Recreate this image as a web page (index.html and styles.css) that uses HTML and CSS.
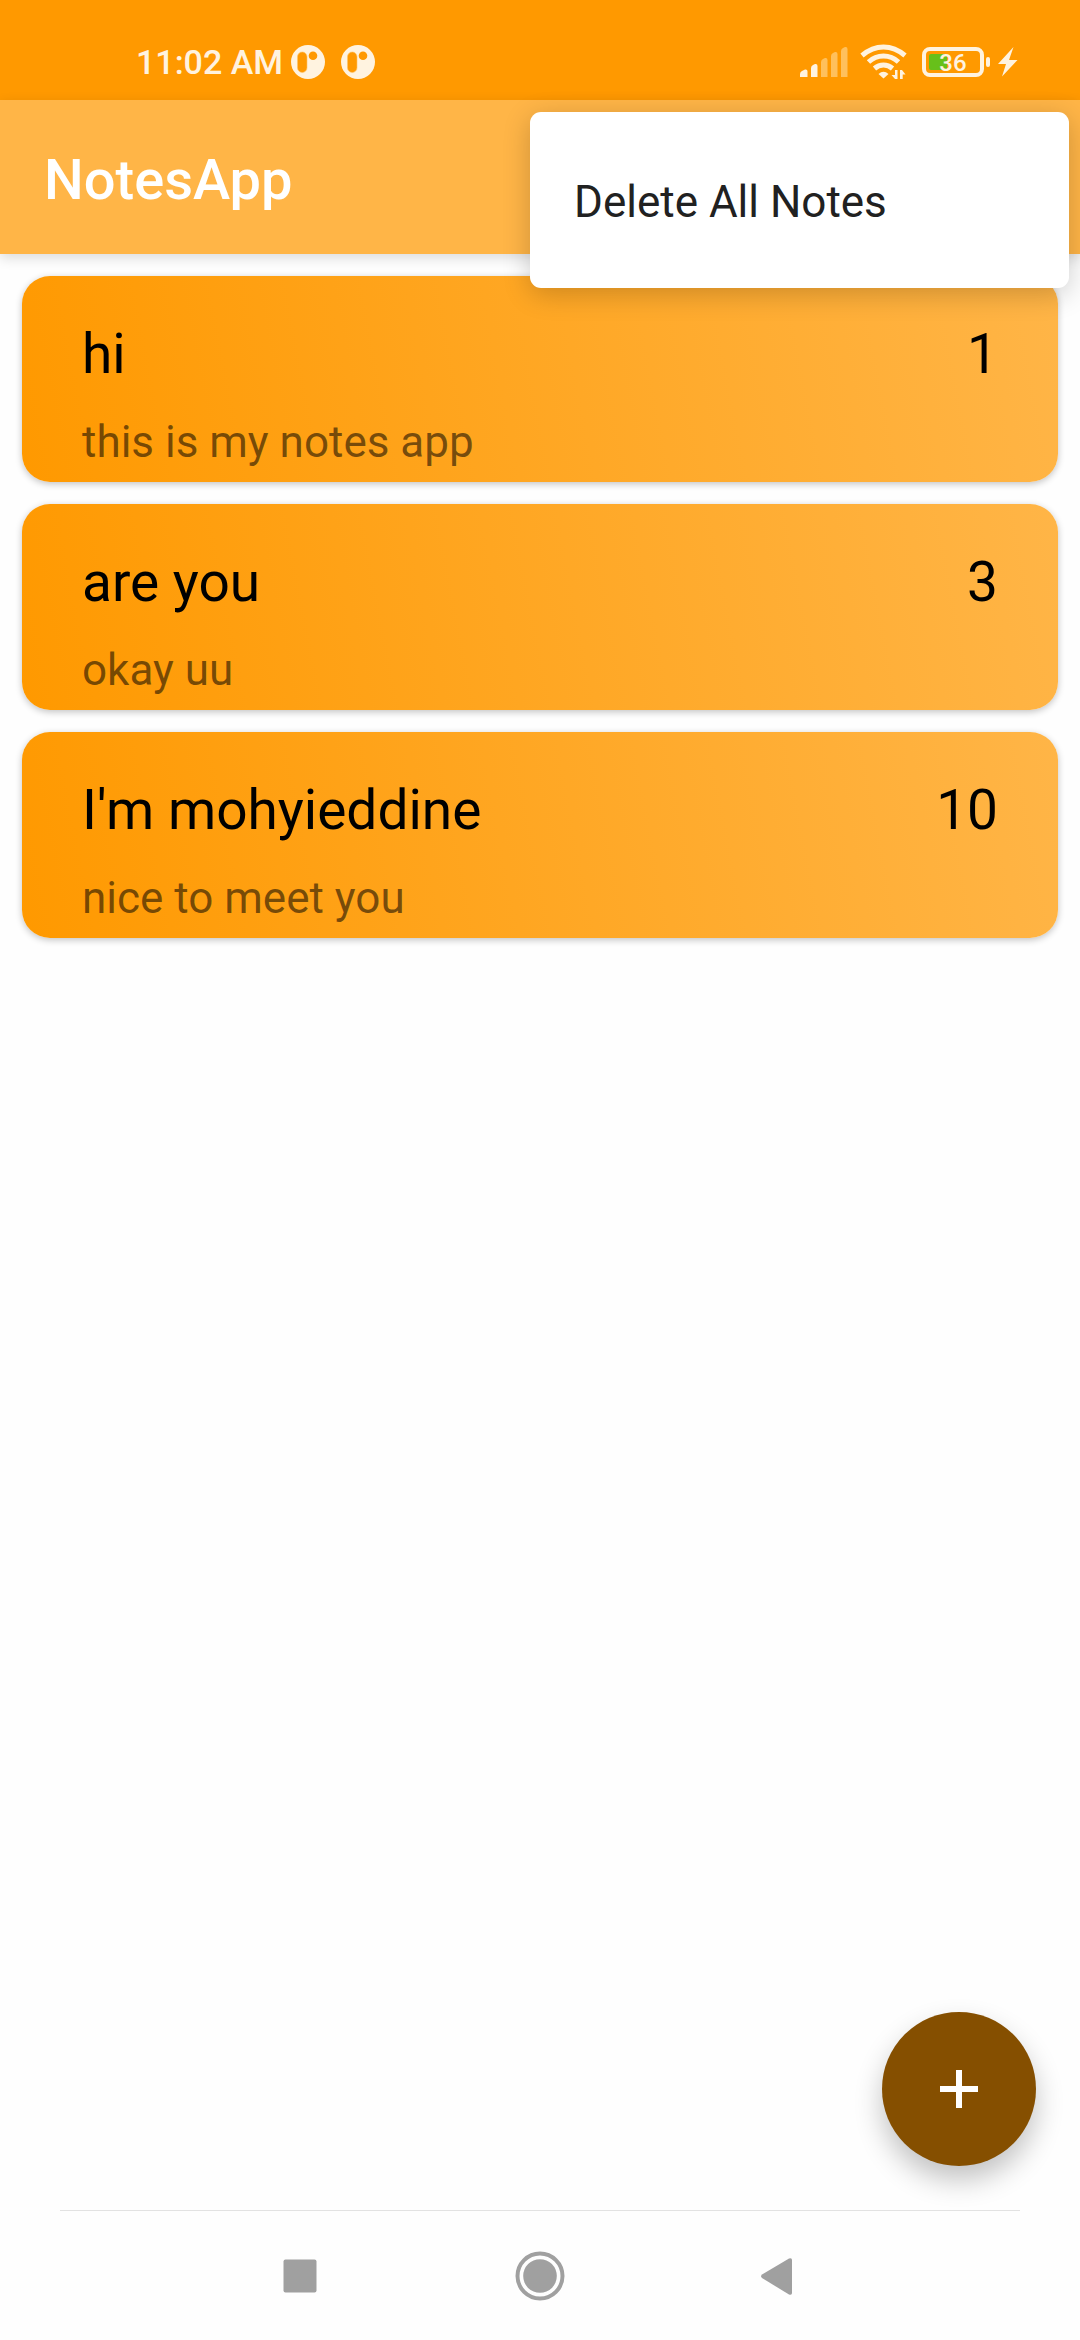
FILE: index.html
```html
<!DOCTYPE html>
<html lang="en">
<head>
  <meta charset="utf-8">
  <meta name="viewport" content="width=device-width, initial-scale=1">
  <title>NotesApp</title>
  <link rel="stylesheet" href="styles.css">
</head>
<body>
  <div class="screen">
    <div class="status-bar">
      <div class="status-left">
        <span class="clock">11:02 AM</span>
        <svg class="badge" viewBox="0 0 34 34" aria-hidden="true">
          <circle cx="17" cy="17" r="17" fill="#fff3e0"/>
          <rect x="6.500" y="7" width="9.500" height="20.500" rx="4.700" fill="#ff9900" stroke="#ffc266" stroke-width="0.600"/>
          <circle cx="22" cy="10.800" r="4.300" fill="#ff9900"/>
        </svg>
        <svg class="badge badge-next" viewBox="0 0 34 34" aria-hidden="true">
          <circle cx="17" cy="17" r="17" fill="#fff3e0"/>
          <rect x="6.500" y="7" width="9.500" height="20.500" rx="4.700" fill="#ff9900" stroke="#ffc266" stroke-width="0.600"/>
          <circle cx="22" cy="10.800" r="4.300" fill="#ff9900"/>
        </svg>
      </div>
      <div class="status-right">
        <svg class="signal" viewBox="0 0 48 32" aria-hidden="true">
          <path d="M0 31v-3q0-2 2-3l3-1.500q2.500-.5 2.500 2V31z" fill="#fff3e0"/>
          <path d="M11 31V22q0-2 2-3l2-1q2.500-.5 2.500 2V31z" fill="#fff3e0"/>
          <g fill="#ffc05c">
            <path d="M21 31V16q0-2 2-3l2-1q2.500-.5 2.500 2V31z"/>
            <path d="M31 31V10q0-2 2-3l2-1q2.500-.5 2.500 2V31z"/>
            <path d="M41 31V5q0-2 2-3l2-1q2.500-.5 2.500 2V31z"/>
          </g>
        </svg>
        <svg class="wifi" viewBox="0 0 48 36" aria-hidden="true">
          <g fill="none" stroke="#fff3e0" stroke-width="5">
            <path d="M2 11.500Q12 3 23.500 3T45 11.500"/>
            <path d="M8.500 18Q15 12 23.500 12T38.500 18"/>
            <path d="M14.500 24.500Q18.500 21 23.500 21T32.500 24.500"/>
          </g>
          <path d="M23.500 34.500l-5-4.500q5-4.500 10 0z" fill="#fff3e0"/>
          <path d="M35 26h2.500v9H35l-3.500-4H35zM40 35v-9h2l3.500 4.500h-2.800V35z" fill="#fff3e0"/>
        </svg>
        <svg class="battery" viewBox="0 0 68 30" role="img" aria-label="Battery">
          <rect x="2" y="2" width="58" height="26" rx="6" fill="none" stroke="#fff3e0" stroke-width="4"/>
          <rect x="7" y="7" width="18" height="16" rx="2" fill="#67c01a"/>
          <rect x="64" y="10" width="4" height="10" rx="2" fill="#fff3e0"/>
          <text x="31" y="24" class="battery-level">36</text>
        </svg>
        <svg class="bolt" viewBox="0 0 20 30" aria-hidden="true">
          <path d="M15.500 0L0 17h8L4 29.500 19.500 13H11z" fill="#fff3e0"/>
        </svg>
      </div>
    </div>

    <header class="app-bar">
      <h1 class="app-title">NotesApp</h1>
      <div class="menu" role="menu">
        <button class="menu-item" type="button" role="menuitem">Delete All Notes</button>
      </div>
    </header>

    <main class="content">
      <ul class="notes">
        <li class="note">
          <div class="note-head"><h2 class="note-title">hi</h2><span class="note-priority">1</span></div>
          <p class="note-text">this is my notes app</p>
        </li>
        <li class="note">
          <div class="note-head"><h2 class="note-title">are you</h2><span class="note-priority">3</span></div>
          <p class="note-text">okay uu</p>
        </li>
        <li class="note">
          <div class="note-head"><h2 class="note-title">I'm mohyieddine</h2><span class="note-priority">10</span></div>
          <p class="note-text">nice to meet you</p>
        </li>
      </ul>
      <button class="fab" type="button" aria-label="Add note">
        <svg class="fab-icon" viewBox="0 0 38 38" aria-hidden="true"><path d="M16 0h6v16h16v6H22v16h-6V22H0v-6h16z" fill="#fff"/></svg>
      </button>
    </main>

    <nav class="nav-bar" aria-label="System">
      <button class="nav-button" type="button" aria-label="Recent apps">
        <svg class="nav-icon" viewBox="0 0 50 50" aria-hidden="true"><rect x="8.500" y="8.500" width="33" height="33" rx="2" fill="#a0a0a0"/></svg>
      </button>
      <button class="nav-button" type="button" aria-label="Home">
        <svg class="nav-icon" viewBox="0 0 50 50" aria-hidden="true"><circle cx="25" cy="25" r="22.500" fill="none" stroke="#a0a0a0" stroke-width="4"/><circle cx="25" cy="25" r="16.800" fill="#a0a0a0"/></svg>
      </button>
      <button class="nav-button" type="button" aria-label="Back">
        <svg class="nav-icon" viewBox="0 0 50 50" aria-hidden="true"><path d="M7 23.500L34 7.500q3-1 3 1.500v33q0 2.500-3 1.500L7 27q-2-1.700 0-3.500z" fill="#a0a0a0"/></svg>
      </button>
    </nav>
  </div>
</body>
</html>
```
FILE: styles.css
```css
* {
  box-sizing: border-box;
}

body {
  margin: 0;
  background: #fefefe;
  font-family: Roboto, "Liberation Sans", sans-serif;
  color: #000;
}

h1, h2, p, ul {
  margin: 0;
  padding: 0;
  font-weight: 400;
}

button {
  margin: 0;
  padding: 0;
  border: 0;
  background: none;
  font: inherit;
  cursor: pointer;
}

svg {
  display: block;
  flex: none;
}

.screen {
  display: flex;
  flex-direction: column;
  min-height: 100vh;
}

/* Status bar */
.status-bar {
  display: flex;
  justify-content: space-between;
  align-items: center;
  height: 100px;
  padding: 24px 62px 0 136px;
  background: #ff9900;
}

.status-left,
.status-right {
  display: flex;
  align-items: center;
}

.clock {
  margin-right: 8px;
  font-size: 34px;
  line-height: 40px;
  font-weight: 500;
  color: #fff3e0;
}

.badge {
  width: 34px;
  height: 34px;
}

.badge-next {
  margin-left: 16px;
}

.signal {
  width: 48px;
  height: 32px;
}

.wifi {
  width: 48px;
  height: 36px;
  margin-left: 12px;
}

.battery {
  width: 68px;
  height: 30px;
  margin-left: 14px;
}

.battery-level {
  font-size: 24px;
  font-weight: 500;
  text-anchor: middle;
  fill: #fff3e0;
}

.bolt {
  width: 20px;
  height: 30px;
  margin-left: 8px;
}

/* App bar and its overflow menu */
.app-bar {
  position: relative;
  z-index: 1;
  display: flex;
  align-items: center;
  height: 154px;
  padding: 6px 44px 0;
  background: #ffb547;
  box-shadow: 0 4px 12px rgba(0, 0, 0, 0.14);
}

.app-title {
  font-size: 56px;
  line-height: 64px;
  font-weight: 500;
  color: #fff;
}

.menu {
  position: absolute;
  top: 12px;
  right: 11px;
  width: calc(50% - 1px);
  padding: 22px 0;
  border-radius: 11px;
  background: #fff;
  box-shadow: 0 6px 28px rgba(0, 0, 0, 0.2);
}

.menu-item {
  display: block;
  width: 100%;
  height: 132px;
  padding: 4px 44px 0;
  font-size: 44px;
  line-height: 52px;
  text-align: left;
  color: #212121;
}

/* Notes */
.content {
  display: flex;
  flex: 1;
  flex-direction: column;
  justify-content: space-between;
  padding: 22px 22px 44px;
}

.notes {
  display: flex;
  flex-direction: column;
  gap: 22px;
  list-style: none;
}

.note {
  display: flex;
  flex-direction: column;
  gap: 30px;
  padding: 46px 60px 14px;
  border-radius: 28px;
  background: linear-gradient(79deg, #ff9900, #ffb547);
  box-shadow: 0 2px 7px rgba(0, 0, 0, 0.24);
}

.note-head {
  display: flex;
  justify-content: space-between;
}

.note-title,
.note-priority {
  font-size: 55px;
  line-height: 64px;
}

.note-text {
  font-size: 44px;
  line-height: 52px;
  color: rgba(0, 0, 0, 0.54);
}

.fab {
  display: flex;
  align-items: center;
  justify-content: center;
  align-self: flex-end;
  width: 154px;
  height: 154px;
  margin-right: 22px;
  border-radius: 50%;
  background: #854f00;
  box-shadow: 0 14px 28px rgba(0, 0, 0, 0.24);
}

.fab-icon {
  width: 38px;
  height: 38px;
}

/* System navigation */
.nav-bar {
  display: flex;
  justify-content: space-around;
  height: 130px;
  margin: 0 60px;
  padding: 0 120px;
  border-top: 1px solid #e2e2e2;
}

.nav-button {
  display: flex;
  flex: 1;
  align-items: center;
  justify-content: center;
}

.nav-icon {
  width: 50px;
  height: 50px;
}
```
